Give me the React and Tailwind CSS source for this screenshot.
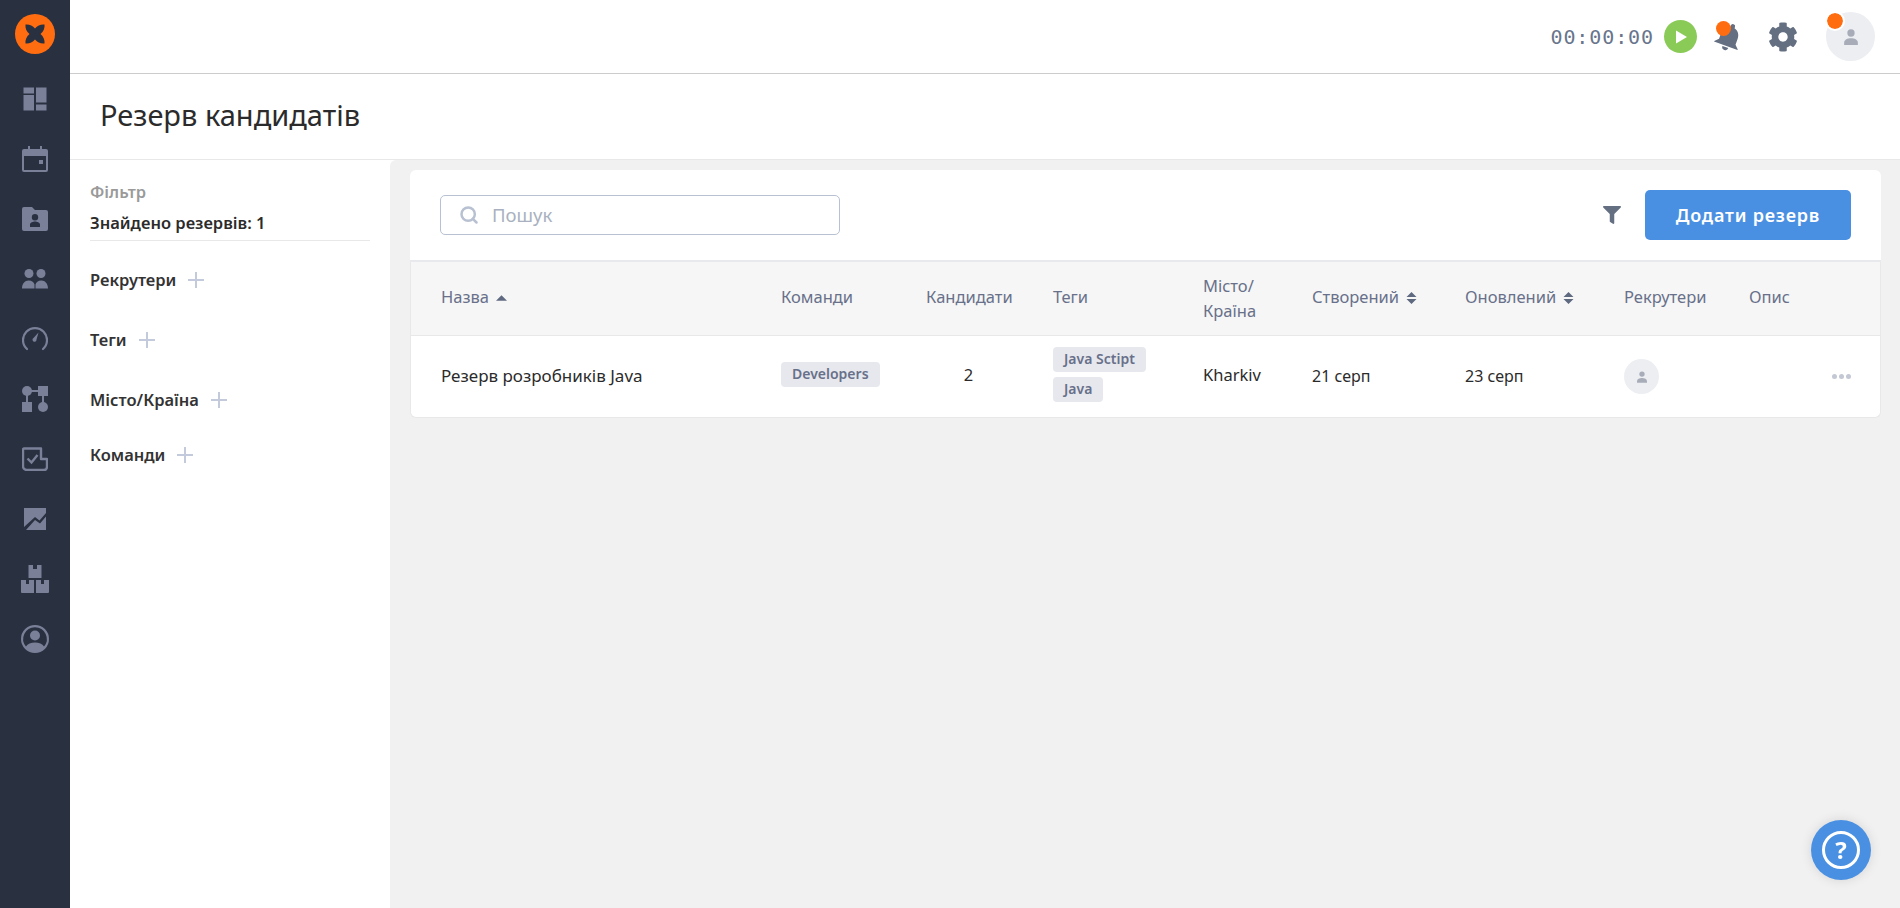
import { FaCog, FaFilter } from "react-icons/fa";
import { FiSearch } from "react-icons/fi";

const font = { fontFamily: '"Noto Sans", sans-serif' };

const Dashboard = () => (
  <svg viewBox="0 0 24 24" className="w-6 h-6" fill="#7b8099">
    <path d="M0.5 0.5h10.5v6h-10.5zM0.5 8h10.5v15.5h-10.5zM13 0.5h10.5v15h-10.5zM13 17.5h10.5v6h-10.5z" />
  </svg>
);
const Calendar = () => (
  <svg viewBox="0 0 26 26" className="w-[26px] h-[26px]" fill="#7b8099">
    <path d="M6 0h2v3h10V0h2v3h4a2 2 0 0 1 2 2v19a2 2 0 0 1-2 2H2a2 2 0 0 1-2-2V5a2 2 0 0 1 2-2h4zM2 10v14h22V10z" />
    <path d="M17 14h4v4h-4z" />
  </svg>
);
const FolderUser = () => (
  <svg viewBox="0 0 26 24" className="w-[26px] h-6" fill="#7b8099">
    <path fillRule="evenodd" d="M2 0h8l3 3h11a2 2 0 0 1 2 2v17a2 2 0 0 1-2 2H2a2 2 0 0 1-2-2V2a2 2 0 0 1 2-2zm11 7a3.2 3.2 0 1 0 0 6.400a3.200 3.200 0 0 0 0-6.400zM8 20h10v-2.500c0-2-3-3-5-3s-5 1-5 3z" />
  </svg>
);
const People = () => (
  <svg viewBox="0 0 26 20" className="w-[26px] h-5" fill="#7b8099">
    <circle cx="7" cy="4.500" r="4.500" />
    <circle cx="19" cy="4.500" r="4.500" />
    <path d="M0 19.500c0-5 3-8 6.500-8s5.500 2 6 4v4zM13.500 19.500v-4c.5-2 2.500-4 6-4s6.500 3 6.500 8z" />
  </svg>
);
const Gauge = () => (
  <svg viewBox="0 0 26 26" className="w-[26px] h-[26px]" fill="none" stroke="#7b8099" strokeWidth="2.200">
    <path d="M5 23a12 12 0 1 1 16 0" strokeLinecap="round" />
    <path d="M16.500 6.500l-2 7a2 2 0 1 1-3-1.500z" fill="#7b8099" stroke="none" />
  </svg>
);
const Flow = () => (
  <svg viewBox="0 0 26 26" className="w-[26px] h-[26px]" fill="#7b8099">
    <circle cx="5" cy="5" r="5" />
    <path d="M16 0h10v10H16zM0 16h10v10H0z" />
    <circle cx="21" cy="21" r="5" />
    <path d="M8 4h9v2H8zM4 8h2v9H4zM20 8h2v9h-2z" />
  </svg>
);
const TaskNote = () => (
  <svg viewBox="0 0 26 24" className="w-[26px] h-6" fill="none" stroke="#7b8099" strokeWidth="2.400">
    <path d="M19 12V1.500H2a1 1 0 0 0-1 1V19a4 4 0 0 0 4 4h17a3 3 0 0 0 3-3v-8z" strokeLinejoin="round" />
    <path d="M5.500 11.500l4 4 6-7.500" strokeWidth="2.400" />
  </svg>
);
const ChartBox = () => (
  <svg viewBox="0 0 24 24" className="w-6 h-6" fill="#7b8099">
    <path d="M1 1h22v5l-6.500 7.500-4.500-3.500-11 10zM23 9.500V23H3l9-10 5 3.500z" />
  </svg>
);
const Boxes = () => (
  <svg viewBox="0 0 28 28" className="w-7 h-7" fill="#7b8099">
    <path d="M7.500 0H12v4h4V0h4.500v13h-13zM0 15h5v4h3v-4h5v13H1a1 1 0 0 1-1-1zM15 15h5v4h3v-4h5v12a1 1 0 0 1-1 1H15z" />
  </svg>
);
const UserCircle = () => (
  <svg viewBox="0 0 28 28" className="w-7 h-7" fill="#7b8099">
    <path fillRule="evenodd" d="M14 0a14 14 0 1 1 0 28a14 14 0 0 1 0-28zm0 2.200a11.800 11.800 0 0 0-9 19.400c1.500-2.600 5-4 9-4s7.500 1.400 9 4a11.800 11.800 0 0 0-9-19.400z" />
    <circle cx="14" cy="10.500" r="5" />
  </svg>
);
const Person = ({ className }) => (
  <svg viewBox="0 0 12 14" className={className} fill="#a7acb8">
    <circle cx="6" cy="3.500" r="3.200" />
    <path d="M0 14v-2c0-2.500 3-3.800 6-3.800s6 1.300 6 3.800v2z" />
  </svg>
);
const Plus = () => (
  <svg viewBox="0 0 16 16" className="w-4 h-4" stroke="#c3cadb" strokeWidth="2">
    <path d="M8 0v16M0 8h16" />
  </svg>
);
const SortBoth = () => (
  <svg viewBox="0 0 10 12" className="w-[11px] h-3" fill="#5f6a80">
    <path d="M5 0l5 5H0zM0 7h10l-5 5z" />
  </svg>
);

const navIcons = [Dashboard, Calendar, FolderUser, People, Gauge, Flow, TaskNote, ChartBox, Boxes, UserCircle];
const filters = [
  { label: "Рекрутери", h: "h-[60px]" },
  { label: "Теги", h: "h-[60px]" },
  { label: "Місто/Країна", h: "h-[60px]" },
  { label: "Команди", h: "h-[50px]" },
];
const gridCols = "grid grid-cols-[370px_145px_127px_150px_109px_153px_159px_125px_1fr]";

function Tag({ children }) {
  return (
    <span className="inline-block h-[25px] leading-[24px] px-[11px] rounded-[4px] bg-[#e6e8ed] text-[#68708a] text-[14px] font-semibold whitespace-nowrap">
      {children}
    </span>
  );
}

export default function App() {
  return (
    <div style={font} className="flex h-[908px] overflow-hidden bg-white text-[#2b2b2b]">
      {/* Sidebar */}
      <aside className="w-[70px] shrink-0 bg-[#293040] flex flex-col items-center">
        <div className="mt-[14px] mb-[15px] w-10 h-10 rounded-full bg-[#ff6d10] flex items-center justify-center">
          <svg viewBox="0 0 24 24" className="w-6 h-6" fill="#293040">
            <path d="M12 6.500C9.500 3.500 6 2 2.500 2.500C2 6 3.500 9.500 6.500 12C3.500 14.500 2 18 2.500 21.500C6 22 9.500 20.500 12 17.500C14.500 20.500 18 22 21.500 21.500C22 18 20.500 14.500 17.500 12C20.500 9.500 22 6 21.500 2.500C18 2 14.500 3.500 12 6.500z" />
          </svg>
        </div>
        <nav className="flex flex-col items-center">
          {navIcons.map((Icon, i) => (
            <div key={i} className="h-[60px] flex items-center justify-center">
              <Icon />
            </div>
          ))}
        </nav>
      </aside>

      <div className="flex-1 flex flex-col min-w-0">
        {/* Top bar */}
        <header className="h-[74px] shrink-0 border-b border-[#cccccc] flex items-center justify-end">
          <span style={{ fontFamily: '"DejaVu Sans Mono", monospace' }} className="text-[20px] text-[#68758c] tracking-[0.9px] mr-[10px]">
            00:00:00
          </span>
          <div className="w-[33px] h-[33px] rounded-full bg-[#8acb58] flex items-center justify-center mr-[17px]">
            <svg viewBox="0 0 12 14" className="w-[11px] h-[14px] ml-[2px]" fill="#fff">
              <path d="M0 0l12 7-12 7z" />
            </svg>
          </div>
          <div className="relative w-[30px] h-[30px] mr-[24px]">
            <svg viewBox="0 0 24 24" className="w-[30px] h-[30px] rotate-[20deg]" fill="#646f82">
              <path d="M12 23a2.500 2.500 0 0 0 2.500-2.500h-5A2.500 2.500 0 0 0 12 23zm7-7v-5c0-3.500-2-6.200-5.200-7V3a1.800 1.800 0 0 0-3.600 0v1C7 4.800 5 7.500 5 11v5l-3 3v.500h20V19z" />
            </svg>
            <span className="absolute left-[2px] top-[-1px] w-[15px] h-[15px] rounded-full bg-[#ff6d10]" />
          </div>
          <FaCog className="w-[30px] h-[30px] text-[#646f82] mr-[28px]" />
          <div className="relative w-[49px] h-[49px] rounded-full bg-[#eceef2] flex items-center justify-center mr-[25px]">
            <Person className="w-[14px] h-4" />
            <span className="absolute left-[1px] top-[1px] w-4 h-4 rounded-full bg-[#ff6d10] outline-2 outline-white" />
          </div>
        </header>

        {/* Title */}
        <div className="h-[86px] shrink-0 border-b border-[#e8e8e8] flex items-center pl-[30px]">
          <h1 className="text-[29px] font-normal text-[#2b2b2b] pb-[3px]">Резерв кандидатів</h1>
        </div>

        <div className="flex-1 flex min-h-0">
          {/* Filter */}
          <div className="w-[320px] shrink-0 pl-5 pr-5">
            <div className="pt-[20px] text-[16.500px] leading-[24px] font-semibold text-[#9a9a9a]">Фільтр</div>
            <div className="mt-[8px] h-[29px] border-b border-[#e8e8e8] text-[16.500px] leading-[22px] font-semibold text-[#2b2b2b]">
              Знайдено резервів: 1
            </div>
            <div className="mt-[9px]">
              {filters.map((f) => (
                <div key={f.label} className={`${f.h} flex items-center gap-[12px] text-[16.500px] font-semibold text-[#333333]`}>
                  {f.label}
                  <Plus />
                </div>
              ))}
            </div>
          </div>

          {/* Main */}
          <main className="flex-1 min-w-0 bg-[#f1f1f1] rounded-tl-[6px] pt-[10px] pl-5 pr-[19px]">
            <div className="h-[92px] bg-white rounded-t-[6px] border-b-2 border-[#e8e9ed] flex items-center pl-[30px] pr-[30px]">
              <div className="w-[400px] h-10 rounded-[5px] border border-[#b8c1d1] flex items-center pl-[18px] gap-[13px]">
                <FiSearch className="w-5 h-5 text-[#b8c1d1]" strokeWidth={3} />
                <span className="text-[18.500px] text-[#a9b1c0]">Пошук</span>
              </div>
              <FaFilter className="ml-auto mr-[24px] w-[18px] h-[18px] text-[#646f82]" />
              <button className="w-[206px] h-[50px] rounded-[5px] bg-[#4a90e2] text-white text-[18px] font-semibold tracking-[0.8px]">
                Додати резерв
              </button>
            </div>

            <div className="bg-white rounded-b-[6px] border border-t-0 border-[#e8e8e8] text-[16.500px]">
              <div className={`${gridCols} h-[74px] items-center bg-[#f6f6f6] border-b border-[#e8e8e8] text-[#68708a] pb-[2px]`}>
                <div className="pl-[30px] flex items-center gap-[7px]">
                  Назва
                  <svg viewBox="0 0 10 5" className="w-[11px] h-[6px]" fill="#5f6a80"><path d="M5 0l5 5H0z" /></svg>
                </div>
                <div>Команди</div>
                <div>Кандидати</div>
                <div>Теги</div>
                <div className="leading-[25px]">Місто/<br />Країна</div>
                <div className="flex items-center gap-[7px]">Створений <SortBoth /></div>
                <div className="flex items-center gap-[7px]">Оновлений <SortBoth /></div>
                <div>Рекрутери</div>
                <div>Опис</div>
              </div>
              <div className={`${gridCols} h-[81px] items-center`}>
                <div className="pl-[30px] text-[17px] -mt-[2px]">Резерв розробників Java</div>
                <div className="-mt-[6px]"><Tag>Developers</Tag></div>
                <div className="text-center pr-[42px] pl-0 -mt-[2px]">2</div>
                <div className="flex flex-col items-start gap-[5px] -mt-[5px]">
                  <Tag>Java Sctipt</Tag>
                  <Tag>Java</Tag>
                </div>
                <div className="-mt-[2px]">Kharkiv</div>
                <div className="text-[16px] -mt-[2px]">21 серп</div>
                <div className="text-[16px] -mt-[2px]">23 серп</div>
                <div>
                  <div className="w-[35px] h-[35px] rounded-full bg-[#eceef2] flex items-center justify-center">
                    <Person className="w-[10px] h-3" />
                  </div>
                </div>
                <div className="flex justify-end pr-[29px]">
                  <div className="flex gap-[2px]">
                    <span className="w-[5px] h-[5px] rounded-full bg-[#c3c8d4]" />
                    <span className="w-[5px] h-[5px] rounded-full bg-[#c3c8d4]" />
                    <span className="w-[5px] h-[5px] rounded-full bg-[#c3c8d4]" />
                  </div>
                </div>
              </div>
            </div>
          </main>
        </div>
      </div>

      {/* Help button */}
      <button className="fixed left-[1811px] top-[820px] w-[60px] h-[60px] rounded-full bg-[#4a90e2] shadow-[0_0_12px_rgba(0,0,0,0.12)] flex items-center justify-center">
        <span className="w-[38px] h-[38px] rounded-full border-[3px] border-white text-white text-[24px] font-bold leading-[31px] text-center">?</span>
      </button>
    </div>
  );
}
